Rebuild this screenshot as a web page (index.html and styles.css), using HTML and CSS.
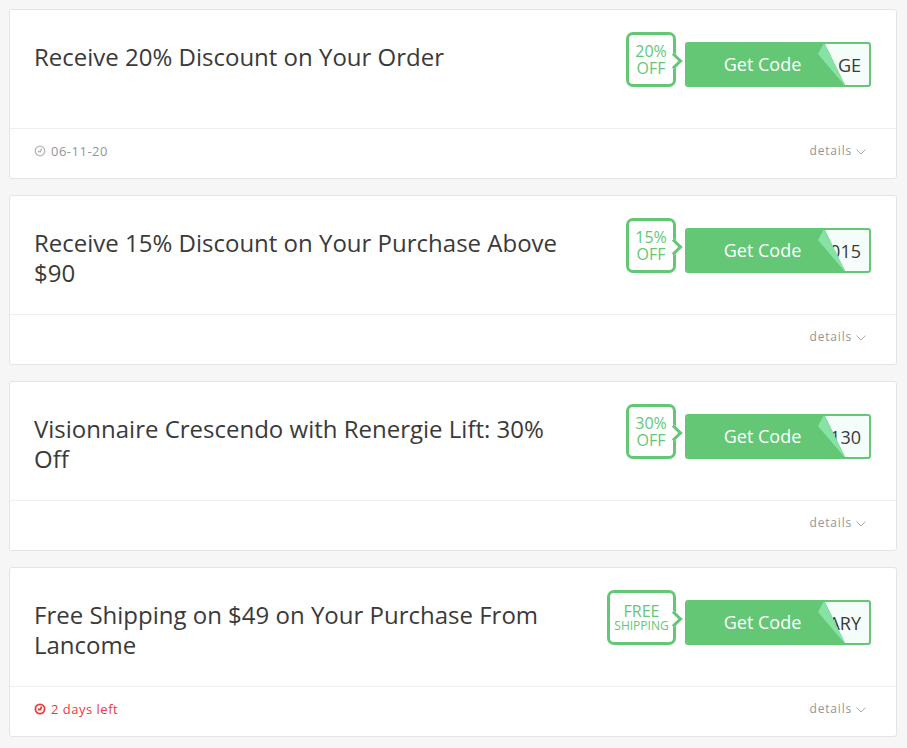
FILE: index.html
```html
<!DOCTYPE html>
<html lang="en">
<head>
<meta charset="utf-8">
<title>Lancome coupons</title>
<link rel="stylesheet" href="styles.css">
</head>
<body>
<main class="list">
  <article class="card">
    <div class="card-main">
      <h2 class="title">Receive 20% Discount on Your Order</h2>
      <div class="offer">
        <div class="badge"><span>20%</span><span>OFF</span></div>
        <a class="code-btn" href="#"><span class="code">GE</span><span class="cover">Get Code</span><span class="fold"></span></a>
      </div>
    </div>
    <div class="card-foot">
      <span class="meta"><svg class="clock" viewBox="0 0 12 12"><circle cx="6" cy="6" r="4.8"/><path d="M7.500 3.500 6.500 6.500H4"/></svg>06-11-20</span>
      <a class="details" href="#">details<svg class="chev" viewBox="0 0 10 6"><path d="M.5.5 5 5 9.500.5"/></svg></a>
    </div>
  </article>
  <article class="card">
    <div class="card-main">
      <h2 class="title">Receive 15% Discount on Your Purchase Above $90</h2>
      <div class="offer">
        <div class="badge"><span>15%</span><span>OFF</span></div>
        <a class="code-btn" href="#"><span class="code">015</span><span class="cover">Get Code</span><span class="fold"></span></a>
      </div>
    </div>
    <div class="card-foot">
      <span class="meta"></span>
      <a class="details" href="#">details<svg class="chev" viewBox="0 0 10 6"><path d="M.5.5 5 5 9.500.5"/></svg></a>
    </div>
  </article>
  <article class="card">
    <div class="card-main">
      <h2 class="title">Visionnaire Crescendo with Renergie Lift: 30% Off</h2>
      <div class="offer">
        <div class="badge"><span>30%</span><span>OFF</span></div>
        <a class="code-btn" href="#"><span class="code">130</span><span class="cover">Get Code</span><span class="fold"></span></a>
      </div>
    </div>
    <div class="card-foot">
      <span class="meta"></span>
      <a class="details" href="#">details<svg class="chev" viewBox="0 0 10 6"><path d="M.5.5 5 5 9.500.5"/></svg></a>
    </div>
  </article>
  <article class="card">
    <div class="card-main">
      <h2 class="title">Free Shipping on $49 on Your Purchase From Lancome</h2>
      <div class="offer">
        <div class="badge badge-wide"><span>FREE</span><span class="small">SHIPPING</span></div>
        <a class="code-btn" href="#"><span class="code">ARY</span><span class="cover">Get Code</span><span class="fold"></span></a>
      </div>
    </div>
    <div class="card-foot">
      <span class="meta meta-alert"><svg class="clock" viewBox="0 0 12 12"><circle cx="6" cy="6" r="4.6"/><path d="M7.500 3.500 6.500 6.500H4"/></svg>2 days left</span>
      <a class="details" href="#">details<svg class="chev" viewBox="0 0 10 6"><path d="M.5.5 5 5 9.500.5"/></svg></a>
    </div>
  </article>
</main>
</body>
</html>
```
FILE: styles.css
```css
* { box-sizing: border-box; }
html, body { margin: 0; padding: 0; }
body {
  background: #f6f6f6;
  font-family: "Open Sans", sans-serif;
  color: #333;
  height: 748px;
  overflow: hidden;
}
.list {
  display: flex;
  flex-direction: column;
  gap: 16px;
  padding: 9px 10px 0 9px;
}
.card {
  background: #fff;
  border: 1px solid #e4e4e4;
  border-radius: 3px;
  height: 170px;
  display: flex;
  flex-direction: column;
}
.card-main {
  height: 118px;
  display: flex;
  justify-content: space-between;
  align-items: flex-start;
  padding: 22px 25px 0 24px;
}
.title {
  margin: 10px 0 0;
  width: 540px;
  font-size: 24px;
  font-weight: 400;
  line-height: 30px;
  color: #3a3a3a;
}
.offer {
  display: flex;
  align-items: flex-end;
  gap: 9px;
}
.badge {
  position: relative;
  width: 50px;
  height: 55px;
  border: 3px solid #64c776;
  border-radius: 7px;
  background: #fff;
  color: #64c776;
  font-size: 16px;
  line-height: 17px;
  display: flex;
  flex-direction: column;
  align-items: center;
  justify-content: center;
}
.badge::after {
  content: "";
  position: absolute;
  right: -7px;
  top: 20px;
  width: 9px;
  height: 9px;
  background: #fff;
  border-top: 3px solid #64c776;
  border-right: 3px solid #64c776;
  transform: rotate(45deg);
}
.badge-wide { width: 69px; line-height: 15px; }
.small { font-size: 12px; line-height: 13px; }
.code-btn {
  position: relative;
  display: flex;
  justify-content: flex-end;
  align-items: center;
  width: 186px;
  height: 45px;
  border: 2px solid #64c776;
  border-radius: 3px;
  background: #f4fdf9;
  color: #3a3a3a;
  font-size: 18px;
  text-decoration: none;
  padding-right: 8px;
  overflow: hidden;
}
.cover {
  position: absolute;
  left: -2px;
  top: -2px;
  width: 186px;
  height: 45px;
  padding-right: 31px;
  background: #64c776;
  color: #fff;
  font-size: 18px;
  line-height: 45px;
  text-align: center;
  clip-path: polygon(0 0, 139px 0, 161px 100%, 0 100%);
}
.fold {
  position: absolute;
  left: -2px;
  top: -2px;
  width: 186px;
  height: 45px;
  background: #86e3a5;
  clip-path: polygon(139px 1px, 133px 12px, 161px 45px);
}
.card-foot {
  flex: 1;
  border-top: 1px solid #eee;
  display: flex;
  justify-content: space-between;
  align-items: center;
  padding: 0 30px 6px 24px;
}
.meta {
  display: flex;
  align-items: center;
  gap: 5px;
  font-size: 13px;
  letter-spacing: .5px;
  color: #959595;
}
.meta-alert { color: #e63c3c; }
.clock {
  width: 12px;
  height: 12px;
  fill: none;
  stroke: #b5b5b5;
  stroke-width: 1.3;
}
.meta-alert .clock { stroke: #e63c3c; stroke-width: 1.8; }
.details {
  display: flex;
  align-items: center;
  gap: 4px;
  font-size: 12px;
  letter-spacing: .8px;
  color: #959595;
  text-decoration: none;
}
.chev {
  width: 10px;
  height: 6px;
  margin-top: 3px;
  fill: none;
  stroke: #aaa;
  stroke-width: 1;
}
```
